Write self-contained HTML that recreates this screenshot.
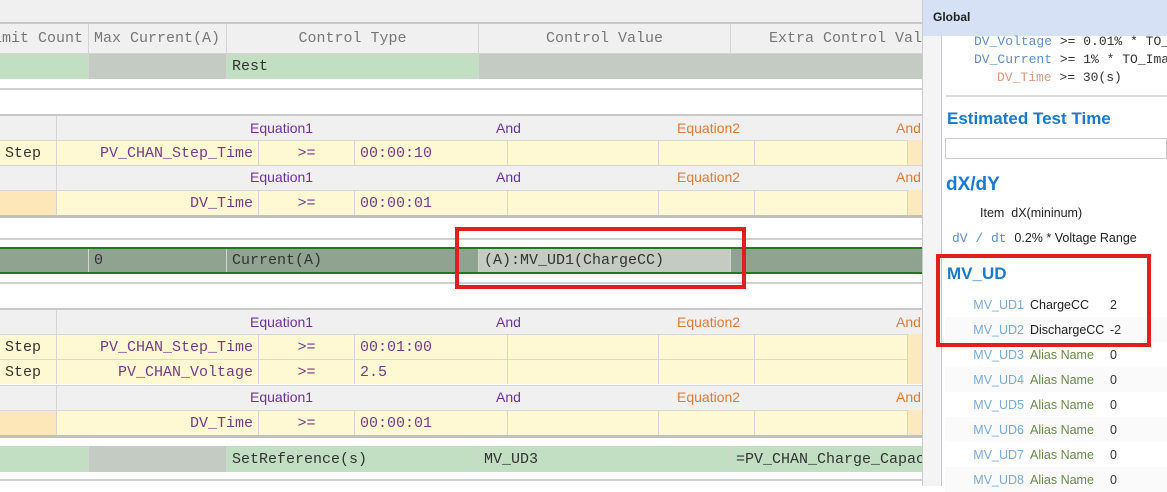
<!DOCTYPE html><html><head><meta charset="utf-8"><style>
*{margin:0;padding:0;box-sizing:border-box}
body{width:1167px;height:486px;overflow:hidden;background:#fff;position:relative;font-family:"Liberation Mono",monospace;font-size:15px;color:#333}
.a{position:absolute}
.row{position:absolute;left:0;width:922px;display:flex}
.row>div{height:100%;border-right:1px solid #d4d4d4;white-space:nowrap;overflow:hidden;display:flex;align-items:center;padding:0 5px}
.eh{position:absolute;left:0;width:922px;height:26px;background:#f0f0f0;border-top:2px solid #c8c8c8;font-family:"Liberation Sans",sans-serif;font-size:14px}
.eh .c0{position:absolute;left:0;top:0;width:57px;height:100%;border-right:1px solid #d4d4d4}
.eh span{position:absolute;top:4px;white-space:nowrap}
.y>div{background:#fff9d3;border-top:1px solid #d8d8d8;color:#7a3a8a}
.hl{position:absolute;left:0;width:922px;height:2px;background:#d0d0d0}
.p{color:#7030a0}.o{color:#e07b39}
.sans{font-family:"Liberation Sans",sans-serif}
.mv{height:25px;display:flex;align-items:center}
.mv span:nth-child(1){width:85px;text-align:right;color:#7aaad8;padding-right:6px}
.mv span:nth-child(2){width:80px;color:#6a8a4a}
</style></head><body>
<div class="a" style="left:0;top:0;width:922px;height:22px;background:#f0f0f0"></div>
<div class="row" style="top:22px;height:31px;border-top:2px solid #c8c8c8;background:#f0f0f0;color:#777">
<div style="width:89px;justify-content:flex-end">imit Count</div>
<div style="width:138px">Max Current(A)</div>
<div style="width:252px;justify-content:center">Control Type</div>
<div style="width:252px;justify-content:center">Control Value</div>
<div style="width:191px;justify-content:flex-end;border:none;padding-right:0">Extra Control Val</div>
</div>
<div class="row" style="top:53px;height:26px;border-top:1px solid #d4d4d4">
<div style="width:89px;background:#c2dfc3"></div>
<div style="width:138px;background:#c3cbc3"></div>
<div style="width:252px;background:#c2dfc3">Rest</div>
<div style="width:443px;background:#c3cbc3;border:none"></div>
</div>
<div class="hl" style="top:88px"></div>

<div class="eh" style="top:114px"><div class="c0"></div><span class="p" style="left:250px">Equation1</span><span class="p" style="left:496px">And</span><span class="o" style="left:677px">Equation2</span><span class="o" style="left:896px">And</span></div>
<div class="row y" style="top:140px;height:25px">
<div style="width:57px;color:#333">Step</div>
<div style="width:202px;justify-content:flex-end">PV_CHAN_Step_Time</div>
<div style="width:96px;justify-content:center">&gt;=</div>
<div style="width:153px">00:00:10</div>
<div style="width:151px"></div><div style="width:96px"></div><div style="width:153px"></div>
<div style="width:14px;background:#fde9c0!important;border:none"></div>
</div>
<div class="eh" style="top:165px;height:25px;border-top:1px solid #d4d4d4"><div class="c0"></div><span class="p" style="left:250px;top:3px">Equation1</span><span class="p" style="left:496px;top:3px">And</span><span class="o" style="left:677px;top:3px">Equation2</span><span class="o" style="left:896px;top:3px">And</span></div>
<div class="row y" style="top:190px;height:25px">
<div style="width:57px;background:#fde6b8!important"></div>
<div style="width:202px;justify-content:flex-end">DV_Time</div>
<div style="width:96px;justify-content:center">&gt;=</div>
<div style="width:153px">00:00:01</div>
<div style="width:151px"></div><div style="width:96px"></div><div style="width:153px"></div>
<div style="width:14px;background:#fde9c0!important;border:none"></div>
</div>
<div class="hl" style="top:215px;height:3px;background:#c0c0c0"></div>
<div class="hl" style="top:238px"></div>
<div class="row" style="top:247px;height:27px;border-top:2px solid #1f7a1f;border-bottom:2px solid #1f7a1f;background:#8fa390">
<div style="width:89px"></div>
<div style="width:138px">0</div>
<div style="width:252px">Current(A)</div>
<div style="width:252px;background:#c3cbc3">(A):MV_UD1(ChargeCC)</div>
</div>
<div class="hl" style="top:282px"></div>
<div class="a" style="left:455px;top:227px;width:291px;height:62px;border:4px solid #e02020"></div>

<div class="eh" style="top:308px"><div class="c0"></div><span class="p" style="left:250px">Equation1</span><span class="p" style="left:496px">And</span><span class="o" style="left:677px">Equation2</span><span class="o" style="left:896px">And</span></div>
<div class="row y" style="top:334px;height:25px">
<div style="width:57px;color:#333">Step</div>
<div style="width:202px;justify-content:flex-end">PV_CHAN_Step_Time</div>
<div style="width:96px;justify-content:center">&gt;=</div>
<div style="width:153px">00:01:00</div>
<div style="width:151px"></div><div style="width:96px"></div><div style="width:153px"></div>
<div style="width:14px;background:#fde9c0!important;border:none"></div>
</div>
<div class="row y" style="top:359px;height:25px">
<div style="width:57px;color:#333">Step</div>
<div style="width:202px;justify-content:flex-end">PV_CHAN_Voltage</div>
<div style="width:96px;justify-content:center">&gt;=</div>
<div style="width:153px">2.5</div>
<div style="width:151px"></div><div style="width:96px"></div><div style="width:153px"></div>
<div style="width:14px;background:#fde9c0!important;border:none"></div>
</div>
<div class="eh" style="top:385px;height:25px;border-top:1px solid #d4d4d4"><div class="c0"></div><span class="p" style="left:250px;top:3px">Equation1</span><span class="p" style="left:496px;top:3px">And</span><span class="o" style="left:677px;top:3px">Equation2</span><span class="o" style="left:896px;top:3px">And</span></div>
<div class="row y" style="top:410px;height:25px">
<div style="width:57px;background:#fde6b8!important"></div>
<div style="width:202px;justify-content:flex-end">DV_Time</div>
<div style="width:96px;justify-content:center">&gt;=</div>
<div style="width:153px">00:00:01</div>
<div style="width:151px"></div><div style="width:96px"></div><div style="width:153px"></div>
<div style="width:14px;background:#fde9c0!important;border:none"></div>
</div>
<div class="hl" style="top:435px;height:3px;background:#c0c0c0"></div>
<div class="row" style="top:446px;height:26px">
<div style="width:89px;background:#c2dfc3"></div>
<div style="width:138px;background:#c3cbc3"></div>
<div style="width:252px;background:#c2dfc3">SetReference(s)</div>
<div style="width:252px;background:#c2dfc3">MV_UD3</div>
<div style="width:191px;background:#c2dfc3;border:none">=PV_CHAN_Charge_Capac</div>
</div>
<div class="hl" style="top:479px"></div>

<div class="a" style="left:922px;top:0;width:245px;height:486px;background:#fff;border-left:1px solid #ccc"></div>
<div class="a" style="left:923px;top:36px;width:19px;height:450px;background:#f4f4f4;border-right:1px solid #c0c8d8"></div>
<div class="a sans" style="left:923px;top:0;width:244px;height:36px;background:#d6e1f6;font-size:12px;font-weight:bold;padding:10px 10px;color:#222">Global</div>
<div class="a" style="left:974px;top:34px;font-size:13px;color:#5b8fd0;white-space:nowrap">DV_Voltage <span style="color:#333">&gt;= 0.01% * TO_</span></div>
<div class="a" style="left:974px;top:52px;font-size:13px;color:#5b8fd0;white-space:nowrap">DV_Current <span style="color:#333">&gt;= 1% * TO_Ima</span></div>
<div class="a" style="left:997px;top:70px;font-size:13px;color:#d89a80;white-space:nowrap">DV_Time <span style="color:#333">&gt;= 30(s)</span></div>
<div class="a" style="left:946px;top:95px;width:221px;height:2px;background:#ddd"></div>
<div class="a sans" style="left:947px;top:109px;font-size:17px;font-weight:bold;color:#1a7ad0">Estimated Test Time</div>
<div class="a" style="left:945px;top:138px;width:222px;height:21px;border:1px solid #ccc"></div>
<div class="a sans" style="left:946px;top:174px;font-size:19px;font-weight:bold;color:#1a7ad0">dX/dY</div>
<div class="a sans" style="left:980px;top:206px;font-size:12.5px;color:#222">Item&nbsp;&nbsp;dX(mininum)</div>
<div class="a" style="left:952px;top:231px;font-size:13px;color:#5b8fd0;white-space:nowrap">dV / dt <span class="sans" style="color:#222;font-size:12.5px">0.2% * Voltage Range</span></div>
<div class="a sans" style="left:947px;top:264px;font-size:17px;font-weight:bold;color:#1a7ad0">MV_UD</div>
<div class="a sans" style="left:945px;top:292px;width:222px;font-size:12.5px">
<div class="mv"><span>MV_UD1</span><span style="color:#222">ChargeCC</span><span>2</span></div>
<div class="mv" style="background:#fafafa"><span>MV_UD2</span><span style="color:#222">DischargeCC</span><span>-2</span></div>
<div class="mv"><span>MV_UD3</span><span>Alias Name</span><span>0</span></div>
<div class="mv" style="background:#fafafa"><span>MV_UD4</span><span>Alias Name</span><span>0</span></div>
<div class="mv"><span>MV_UD5</span><span>Alias Name</span><span>0</span></div>
<div class="mv" style="background:#fafafa"><span>MV_UD6</span><span>Alias Name</span><span>0</span></div>
<div class="mv"><span>MV_UD7</span><span>Alias Name</span><span>0</span></div>
<div class="mv" style="background:#fafafa"><span>MV_UD8</span><span>Alias Name</span><span>0</span></div>
</div>
<div class="a" style="left:936px;top:254px;width:215px;height:93px;border:4px solid #e02020"></div>
</body></html>
